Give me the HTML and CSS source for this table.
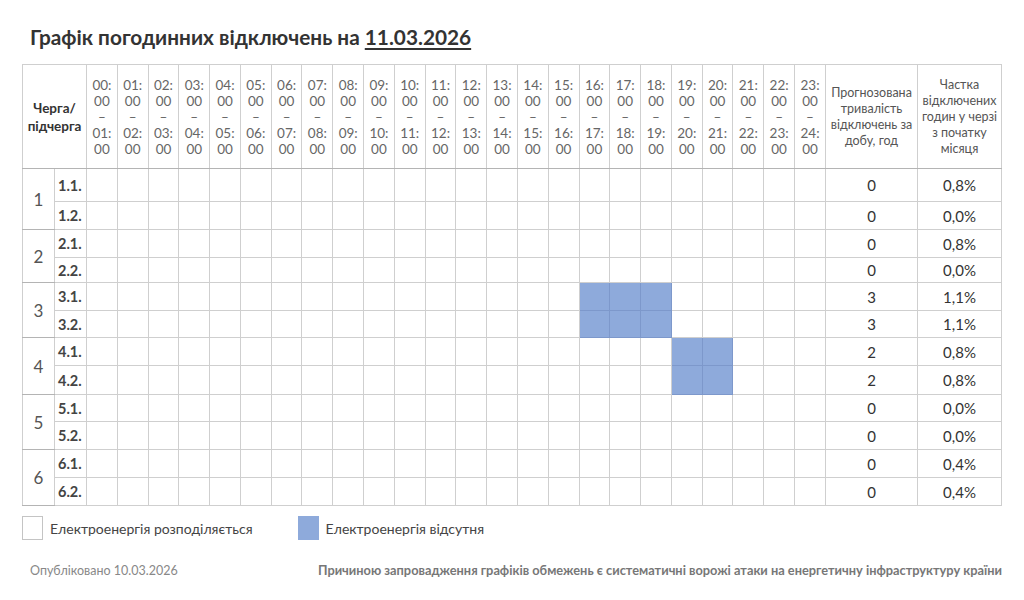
FILE: index.html
```html
<!DOCTYPE html>
<html lang="uk">
<head>
<meta charset="utf-8">
<title>Графік погодинних відключень</title>
<link rel="stylesheet" href="styles.css">
</head>
<body>
<div class="page">
  <h1 class="title">Графік погодинних відключень на <span class="date">11.03.2026</span></h1>
  <table class="grid">
    <colgroup>
      <col class="c-grp"><col class="c-sub">
      <col><col><col><col><col><col><col><col><col><col><col><col>
      <col><col><col><col><col><col><col><col><col><col><col><col>
      <col class="c-fc"><col class="c-sh">
    </colgroup>
    <thead>
      <tr>
        <th colspan="2" class="h-queue">Черга/<br>підчерга</th>
        <th>00:<br>00<br>–<br>01:<br>00</th>
        <th>01:<br>00<br>–<br>02:<br>00</th>
        <th>02:<br>00<br>–<br>03:<br>00</th>
        <th>03:<br>00<br>–<br>04:<br>00</th>
        <th>04:<br>00<br>–<br>05:<br>00</th>
        <th>05:<br>00<br>–<br>06:<br>00</th>
        <th>06:<br>00<br>–<br>07:<br>00</th>
        <th>07:<br>00<br>–<br>08:<br>00</th>
        <th>08:<br>00<br>–<br>09:<br>00</th>
        <th>09:<br>00<br>–<br>10:<br>00</th>
        <th>10:<br>00<br>–<br>11:<br>00</th>
        <th>11:<br>00<br>–<br>12:<br>00</th>
        <th>12:<br>00<br>–<br>13:<br>00</th>
        <th>13:<br>00<br>–<br>14:<br>00</th>
        <th>14:<br>00<br>–<br>15:<br>00</th>
        <th>15:<br>00<br>–<br>16:<br>00</th>
        <th>16:<br>00<br>–<br>17:<br>00</th>
        <th>17:<br>00<br>–<br>18:<br>00</th>
        <th>18:<br>00<br>–<br>19:<br>00</th>
        <th>19:<br>00<br>–<br>20:<br>00</th>
        <th>20:<br>00<br>–<br>21:<br>00</th>
        <th>21:<br>00<br>–<br>22:<br>00</th>
        <th>22:<br>00<br>–<br>23:<br>00</th>
        <th>23:<br>00<br>–<br>24:<br>00</th>
        <th class="h-wide">Прогнозована<br>тривалість<br>відключень за<br>добу, год</th>
        <th class="h-wide">Частка<br>відключених<br>годин у черзі<br>з початку<br>місяця</th>
      </tr>
    </thead>
    <tbody>
      <tr class="g-top">
        <td rowspan="2" class="grp">1</td><td class="sub">1.1.</td>
        <td></td><td></td><td></td><td></td><td></td><td></td><td></td><td></td><td></td><td></td><td></td><td></td>
        <td></td><td></td><td></td><td></td><td></td><td></td><td></td><td></td><td></td><td></td><td></td><td></td>
        <td class="val">0</td><td class="val">0,8%</td>
      </tr>
      <tr>
        <td class="sub">1.2.</td>
        <td></td><td></td><td></td><td></td><td></td><td></td><td></td><td></td><td></td><td></td><td></td><td></td>
        <td></td><td></td><td></td><td></td><td></td><td></td><td></td><td></td><td></td><td></td><td></td><td></td>
        <td class="val">0</td><td class="val">0,0%</td>
      </tr>
      <tr class="g-top">
        <td rowspan="2" class="grp">2</td><td class="sub">2.1.</td>
        <td></td><td></td><td></td><td></td><td></td><td></td><td></td><td></td><td></td><td></td><td></td><td></td>
        <td></td><td></td><td></td><td></td><td></td><td></td><td></td><td></td><td></td><td></td><td></td><td></td>
        <td class="val">0</td><td class="val">0,8%</td>
      </tr>
      <tr class="r-short">
        <td class="sub">2.2.</td>
        <td></td><td></td><td></td><td></td><td></td><td></td><td></td><td></td><td></td><td></td><td></td><td></td>
        <td></td><td></td><td></td><td></td><td></td><td></td><td></td><td></td><td></td><td></td><td></td><td></td>
        <td class="val">0</td><td class="val">0,0%</td>
      </tr>
      <tr class="g-top">
        <td rowspan="2" class="grp">3</td><td class="sub">3.1.</td>
        <td></td><td></td><td></td><td></td><td></td><td></td><td></td><td></td><td></td><td></td><td></td><td></td>
        <td></td><td></td><td></td><td></td><td class="off"></td><td class="off"></td><td class="off"></td><td></td><td></td><td></td><td></td><td></td>
        <td class="val">3</td><td class="val">1,1%</td>
      </tr>
      <tr class="r-mid">
        <td class="sub">3.2.</td>
        <td></td><td></td><td></td><td></td><td></td><td></td><td></td><td></td><td></td><td></td><td></td><td></td>
        <td></td><td></td><td></td><td></td><td class="off"></td><td class="off"></td><td class="off"></td><td></td><td></td><td></td><td></td><td></td>
        <td class="val">3</td><td class="val">1,1%</td>
      </tr>
      <tr class="g-top">
        <td rowspan="2" class="grp">4</td><td class="sub">4.1.</td>
        <td></td><td></td><td></td><td></td><td></td><td></td><td></td><td></td><td></td><td></td><td></td><td></td>
        <td></td><td></td><td></td><td></td><td></td><td></td><td></td><td class="off"></td><td class="off"></td><td></td><td></td><td></td>
        <td class="val">2</td><td class="val">0,8%</td>
      </tr>
      <tr class="r-tall">
        <td class="sub">4.2.</td>
        <td></td><td></td><td></td><td></td><td></td><td></td><td></td><td></td><td></td><td></td><td></td><td></td>
        <td></td><td></td><td></td><td></td><td></td><td></td><td></td><td class="off"></td><td class="off"></td><td></td><td></td><td></td>
        <td class="val">2</td><td class="val">0,8%</td>
      </tr>
      <tr class="g-top r-mid">
        <td rowspan="2" class="grp">5</td><td class="sub">5.1.</td>
        <td></td><td></td><td></td><td></td><td></td><td></td><td></td><td></td><td></td><td></td><td></td><td></td>
        <td></td><td></td><td></td><td></td><td></td><td></td><td></td><td></td><td></td><td></td><td></td><td></td>
        <td class="val">0</td><td class="val">0,0%</td>
      </tr>
      <tr>
        <td class="sub">5.2.</td>
        <td></td><td></td><td></td><td></td><td></td><td></td><td></td><td></td><td></td><td></td><td></td><td></td>
        <td></td><td></td><td></td><td></td><td></td><td></td><td></td><td></td><td></td><td></td><td></td><td></td>
        <td class="val">0</td><td class="val">0,0%</td>
      </tr>
      <tr class="g-top">
        <td rowspan="2" class="grp">6</td><td class="sub">6.1.</td>
        <td></td><td></td><td></td><td></td><td></td><td></td><td></td><td></td><td></td><td></td><td></td><td></td>
        <td></td><td></td><td></td><td></td><td></td><td></td><td></td><td></td><td></td><td></td><td></td><td></td>
        <td class="val">0</td><td class="val">0,4%</td>
      </tr>
      <tr>
        <td class="sub">6.2.</td>
        <td></td><td></td><td></td><td></td><td></td><td></td><td></td><td></td><td></td><td></td><td></td><td></td>
        <td></td><td></td><td></td><td></td><td></td><td></td><td></td><td></td><td></td><td></td><td></td><td></td>
        <td class="val">0</td><td class="val">0,4%</td>
      </tr>
    </tbody>
  </table>
  <div class="legend">
    <div class="legend-item"><span class="swatch swatch-on"></span><span>Електроенергія розподіляється</span></div>
    <div class="legend-item"><span class="swatch swatch-off"></span><span>Електроенергія відсутня</span></div>
  </div>
  <div class="footer">
    <span class="published">Опубліковано 10.03.2026</span>
    <span class="reason">Причиною запровадження графіків обмежень є систематичні ворожі атаки на енергетичну інфраструктуру країни</span>
  </div>
</div>
</body>
</html>
```

FILE: styles.css
```css
html, body {
  margin: 0;
  padding: 0;
  background: #ffffff;
}

body {
  font-family: Lato, "Open Sans", "Noto Sans", sans-serif;
  color: #333333;
}

.page {
  width: 980px;
  padding: 24px 0 0 22px;
}

.title {
  margin: 0 0 14px 8px;
  font-size: 20.8px;
  line-height: 26px;
  font-weight: 700;
  color: #333333;
}

.date {
  text-decoration: underline;
  text-decoration-thickness: 2px;
  text-underline-offset: 3px;
}

.grid {
  width: 980px;
  table-layout: fixed;
  border-collapse: collapse;
  border: 1px solid #b4b4b4;
}

.c-grp { width: 32px; }
.c-sub { width: 32px; }
.c-fc { width: 92px; }
.c-sh { width: 84px; }

.grid th,
.grid td {
  border: 1px solid #cfcfcf;
  padding: 0;
  text-align: center;
  vertical-align: middle;
}

.grid thead th {
  height: 103px;
  font-weight: 400;
  font-size: 13.5px;
  line-height: 16px;
  color: #666666;
  border-bottom-color: #b4b4b4;
}

.grid thead th.h-queue {
  font-weight: 700;
  font-size: 13.5px;
  line-height: 18px;
  color: #333333;
}

.grid thead th.h-wide {
  font-size: 12.5px;
  line-height: 16px;
  color: #555555;
}

.grid tbody td {
  height: 27px;
}

.grid tbody tr:first-child td {
  height: 32px;
}

.grid tbody tr.r-short td {
  height: 24px;
}

.grid tbody tr.r-mid td {
  height: 26px;
}

.grid tbody tr.r-tall td {
  height: 28px;
}

.grid tr.g-top td {
  border-top-color: #b4b4b4;
}

.grid td.grp {
  font-size: 17px;
  color: #555555;
  border-bottom-color: #b4b4b4;
}

.grid td.sub {
  font-weight: 700;
  font-size: 14.5px;
  color: #444444;
  text-align: left;
  padding-left: 3px;
}

.grid td.val {
  font-size: 15px;
  color: #333333;
}

.grid td.off {
  background: #8eaadb;
  border-color: #7d98cb;
}

.legend {
  display: flex;
  align-items: center;
  margin-top: 10px;
  height: 24px;
  font-size: 14px;
  color: #444444;
}

.legend-item {
  display: flex;
  align-items: center;
  gap: 7px;
}

.legend-item + .legend-item {
  margin-left: 45px;
}

.swatch {
  display: block;
  width: 21px;
  height: 24px;
  box-sizing: border-box;
}

.swatch-on {
  border: 1px solid #c4c4c4;
  background: #ffffff;
}

.swatch-off {
  background: #8eaadb;
}

.footer {
  display: flex;
  justify-content: space-between;
  align-items: baseline;
  margin-top: 22px;
  padding-left: 8px;
  font-size: 12.5px;
  color: #888888;
}

.reason {
  font-weight: 700;
  font-size: 12.8px;
  color: #777777;
}
```
